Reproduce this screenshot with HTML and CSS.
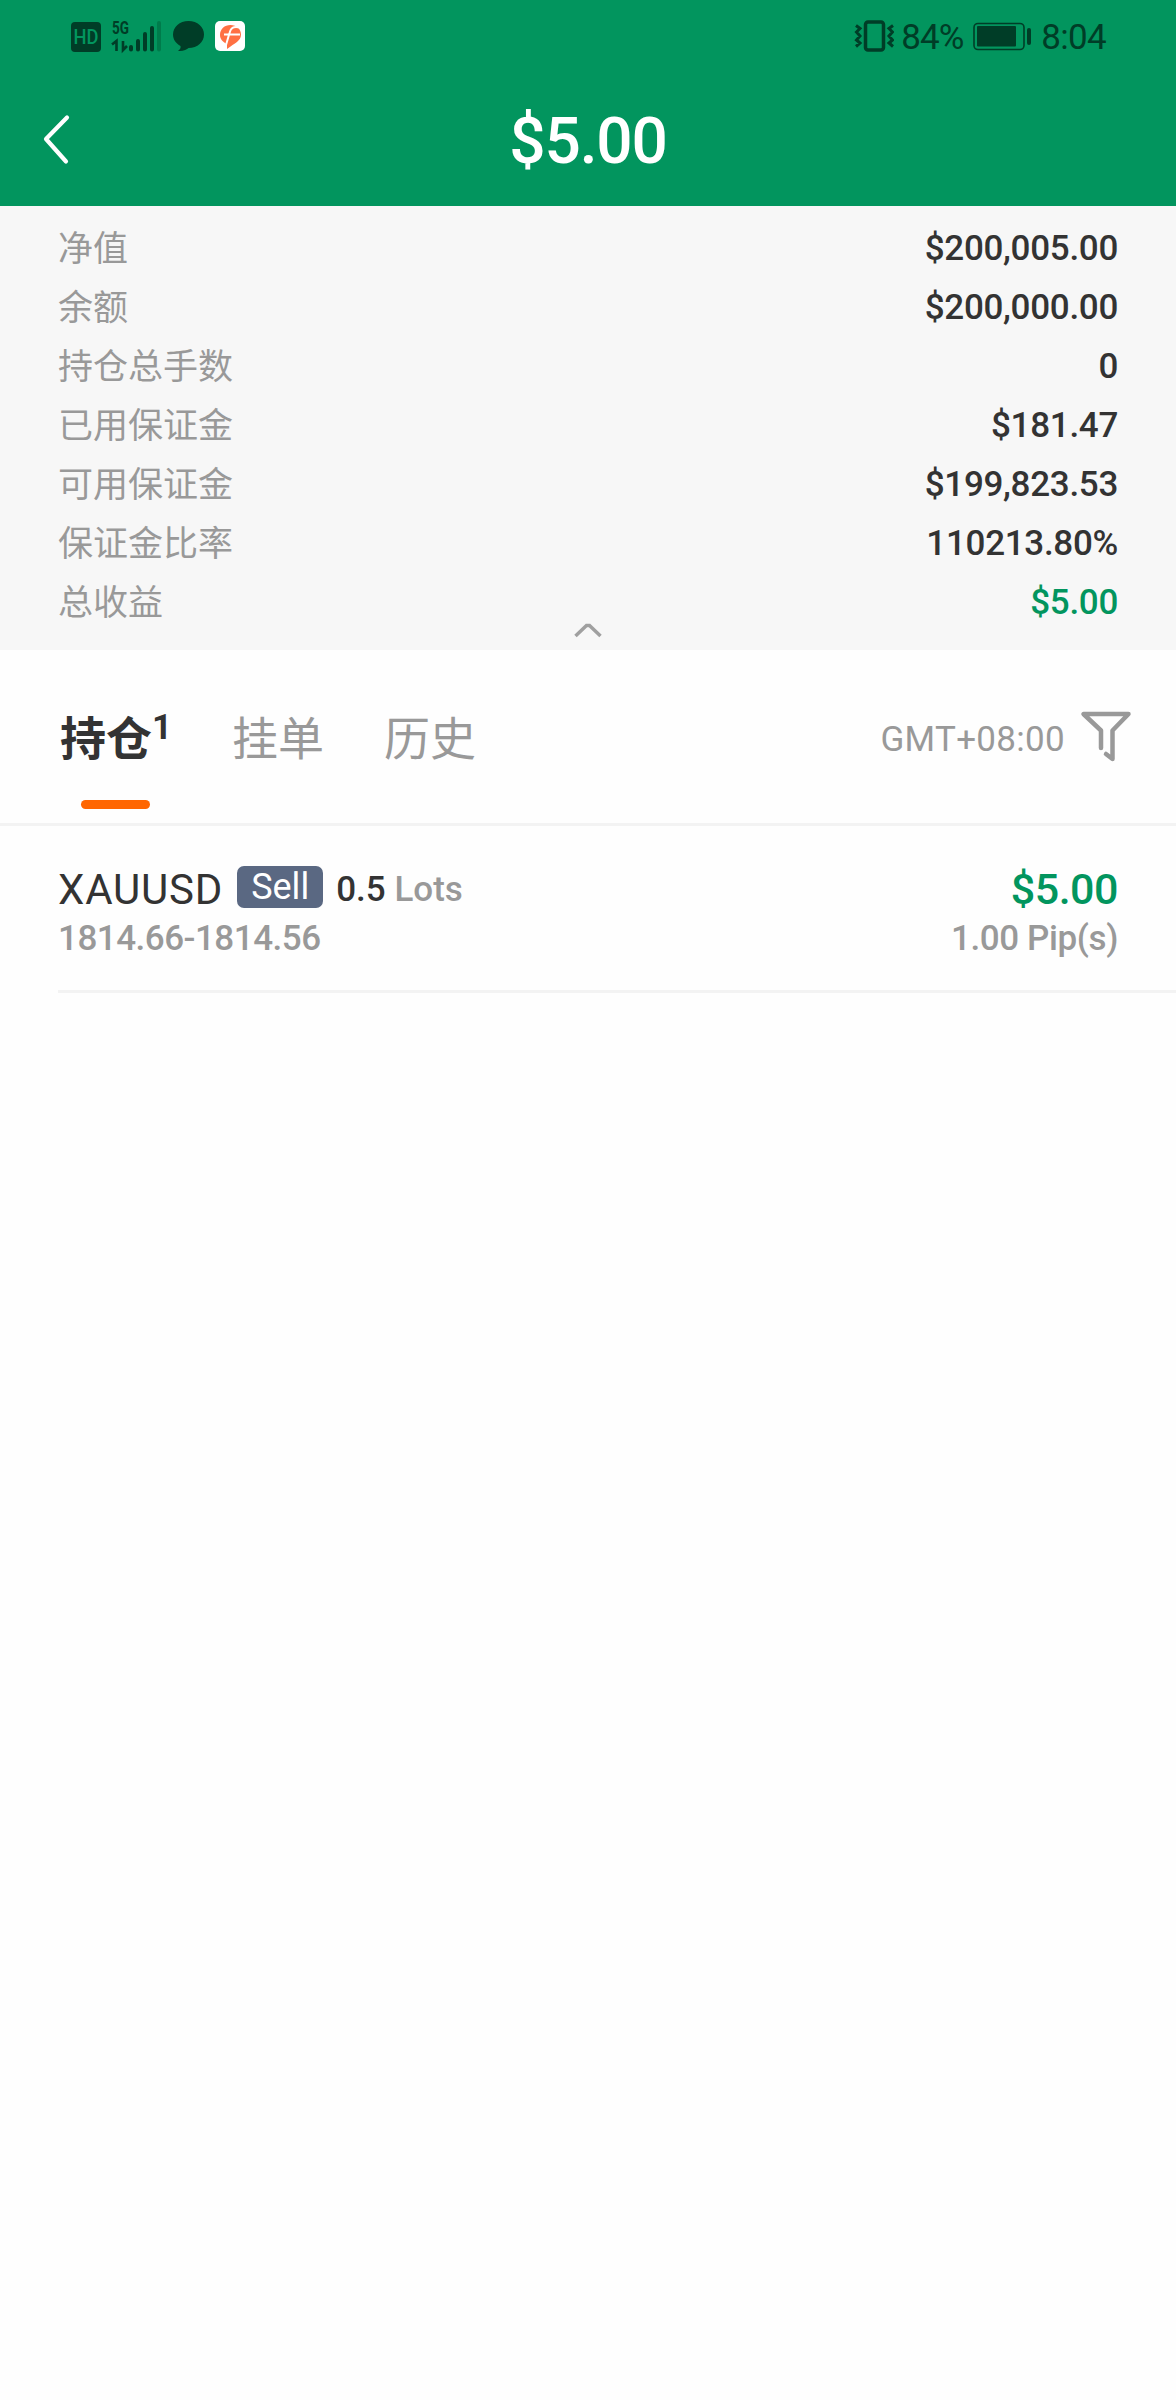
FILE: index.html
```html
<!DOCTYPE html>
<html lang="zh-CN">
<head>
<meta charset="utf-8">
<title>持仓</title>
<link rel="stylesheet" href="styles.css">
</head>
<body>
<header class="header">
  <div class="status">
    <svg class="status-left" width="180" height="40" viewBox="70 16 180 40">
      <rect x="71" y="22" width="30" height="30" rx="4" fill="#003d27"/>
      <text class="hd" x="73.5" y="44" textLength="25" lengthAdjust="spacingAndGlyphs">HD</text>
      <text class="net" x="112" y="34" textLength="17" lengthAdjust="spacingAndGlyphs">5G</text>
      <path d="M112 44.500L116.500 41V51M123 41V50L127 46" fill="none" stroke="#003d27" stroke-width="2.600"/>
      <path d="M131 47V49.500M138 41V49.500M145 34V49.500M152 28V49.500" fill="none" stroke="#003d27" stroke-width="4" stroke-linecap="round"/>
      <path d="M159 23V49.500" fill="none" stroke="#007b4b" stroke-width="4" stroke-linecap="round"/>
      <path d="M188.500 21C197.500 21 204 27 204 34.500S197.500 48 188.500 48C187 49.500 183 51.500 178 51C180 49.500 181 48 180.500 46C176 43.500 173 39.500 173 34.500C173 27 179.500 21 188.500 21Z" fill="#003d27"/>
      <rect x="215" y="21" width="30" height="30" rx="5" fill="#fff"/>
      <path d="M227 49V44C222.500 42 220 39 220 35C220 29 224.500 25 230.500 25C236.500 25 241 29 241 34.500C241 41 235 43 227 49Z" fill="#ff7043"/>
      <path d="M240 27.500C233 26 230.500 28 229.500 33L226 45M224 34.500H240" fill="none" stroke="#fff" stroke-width="2"/>
    </svg>
    <div class="status-right">
      <svg width="40" height="32" viewBox="855 20 40 32" fill="none" stroke="#003d27">
        <rect x="866.500" y="22" width="18" height="28" rx="2.500" stroke-width="3.500"/>
        <path d="M857 25.500L861 28.500L857.500 32L861 36L857.500 40L861 43L857 46.500M894 25.500L890 28.500L893.500 32L890 36L893.500 40L890 43L894 46.500" stroke-width="3"/>
      </svg>
      <span class="percent">84%</span>
      <svg class="battery" width="60" height="30" viewBox="972 21 60 30">
        <rect x="974" y="23.500" width="50" height="26" rx="4" fill="none" stroke="#003d27" stroke-width="1.600"/>
        <rect x="977" y="26" width="39" height="20.500" rx="1" fill="#003d27"/>
        <rect x="1027" y="28" width="4" height="17" rx="2" fill="#003d27"/>
      </svg>
      <span class="clock">8:04</span>
    </div>
  </div>
  <div class="title-bar">
    <svg class="back" width="30" height="52" viewBox="0 0 30 52"><path d="M26 4.500L5 26L25 48.500" fill="none" stroke="#fff" stroke-width="4.200" stroke-linecap="round" stroke-linejoin="round"/></svg>
    <h1 class="title">$5.00</h1>
  </div>
</header>
<section class="summary">
  <div class="row"><span class="label">净值</span><span class="value">$200,005.00</span></div>
  <div class="row"><span class="label">余额</span><span class="value">$200,000.00</span></div>
  <div class="row"><span class="label">持仓总手数</span><span class="value">0</span></div>
  <div class="row"><span class="label">已用保证金</span><span class="value">$181.47</span></div>
  <div class="row"><span class="label">可用保证金</span><span class="value">$199,823.53</span></div>
  <div class="row"><span class="label">保证金比率</span><span class="value">110213.80%</span></div>
  <div class="row"><span class="label">总收益</span><span class="value gain">$5.00</span></div>
  <svg class="collapse" width="32" height="18" viewBox="0 0 32 18"><path d="M3.500 15L14.500 4.500H17.500L28.500 15" fill="none" stroke="#a0a0a0" stroke-width="3.500"/></svg>
</section>
<nav class="tabs">
  <span class="tab active">持仓<sup class="count">1</sup></span>
  <span class="tab">挂单</span>
  <span class="tab">历史</span>
  <span class="zone">GMT+08:00</span>
  <svg class="filter" width="54" height="54" viewBox="0 0 54 54"><path d="M22 38V20.500L4.500 4H49.500L33.500 20.500V49L27 44" fill="none" stroke="#999" stroke-width="4.500" stroke-linecap="round" stroke-linejoin="round"/></svg>
</nav>
<main class="list">
  <article class="position">
    <div class="line">
      <span class="symbol">XAUUSD</span>
      <span class="badge">Sell</span>
      <span class="lots">0.5 <span class="unit">Lots</span></span>
      <span class="profit">$5.00</span>
    </div>
    <div class="line detail">
      <span class="range">1814.66-1814.56</span>
      <span class="pips">1.00 Pip(s)</span>
    </div>
  </article>
</main>
</body>
</html>
```
FILE: styles.css
```css
* { box-sizing: border-box; }
body {
  margin: 0;
  min-height: 2400px;
  background: #fefefe;
  color: #333;
  font-family: Roboto, "Noto Sans CJK SC", sans-serif;
}
svg { display: block; flex: none; }
.header { height: 206px; background: #02955e; }
.status {
  display: flex;
  justify-content: space-between;
  height: 72px;
  padding: 16px 70px 0 70px;
  color: #003d27;
}
.status-right { display: flex; align-items: center; height: 40px; }
.hd { font: 500 20px Roboto, sans-serif; fill: #02955e; }
.net { font: 700 18px Roboto, sans-serif; fill: #003d27; }
.percent, .clock { padding-top: 3px; font-size: 35px; line-height: 40px; }
.percent { width: 66px; margin-left: 7px; letter-spacing: -0.9px; }
.battery { margin-left: 5px; }
.clock { margin-left: 9px; letter-spacing: -0.7px; }
.title-bar { display: flex; align-items: center; height: 134px; padding: 0 41px; }
.back { margin-right: -30px; }
.title {
  flex: 1;
  margin: 0;
  padding-top: 5px;
  color: #fff;
  font-size: 64px;
  font-weight: 500;
  line-height: 134px;
  letter-spacing: -1.2px;
  text-align: center;
}
.summary { height: 444px; padding: 14px 58px 0; background: #f7f7f7; }
.row {
  display: flex;
  justify-content: space-between;
  align-items: center;
  height: 59px;
  font-size: 35px;
  line-height: 59px;
}
.label { color: #999; }
.value { padding-bottom: 2px; font-weight: 500; letter-spacing: -0.3px; }
.gain, .profit { color: #02955e; }
.collapse { margin: -12px auto 0; }
.tabs {
  display: flex;
  align-items: center;
  height: 176px;
  padding: 0 43px 0 60px;
  border-bottom: 3px solid #f3f3f3;
}
.tab { margin-right: 60px; padding-top: 5px; color: #999; font-size: 46px; line-height: 168px; }
.tab.active {
  position: relative;
  color: #333;
  font-weight: 700;
}
.tab.active::after {
  content: "";
  position: absolute;
  left: 21px;
  bottom: 14px;
  width: 69px;
  height: 9px;
  border-radius: 5px;
  background: #ff6600;
}
.count { font-size: 35px; line-height: 0; vertical-align: 16px; }
.zone { margin-left: auto; padding-top: 5px; color: #999; font-size: 35px; letter-spacing: 0.3px; }
.filter { margin-left: 14px; }
.position {
  height: 167px;
  margin-left: 58px;
  padding: 38px 58px 0 0;
  border-bottom: 3px solid #f3f3f3;
}
.line { display: flex; height: 50px; align-items: center; font-size: 35px; line-height: 50px; }
.symbol { padding-top: 1px; font-size: 42px; letter-spacing: 0.8px; }
.badge {
  width: 86px;
  height: 42px;
  margin: -4px 0 0 14px;
  border-radius: 7px;
  background: #5a6882;
  color: #fff;
  font-size: 36px;
  line-height: 42px;
  text-align: center;
}
.lots { margin-left: 13px; padding-top: 1px; font-weight: 500; }
.unit { color: #999; }
.profit { margin-left: auto; font-size: 43px; font-weight: 500; letter-spacing: -0.5px; }
.detail { justify-content: space-between; color: #999; font-weight: 500; }
.range { letter-spacing: -0.5px; }
.pips { letter-spacing: -0.4px; }
```
